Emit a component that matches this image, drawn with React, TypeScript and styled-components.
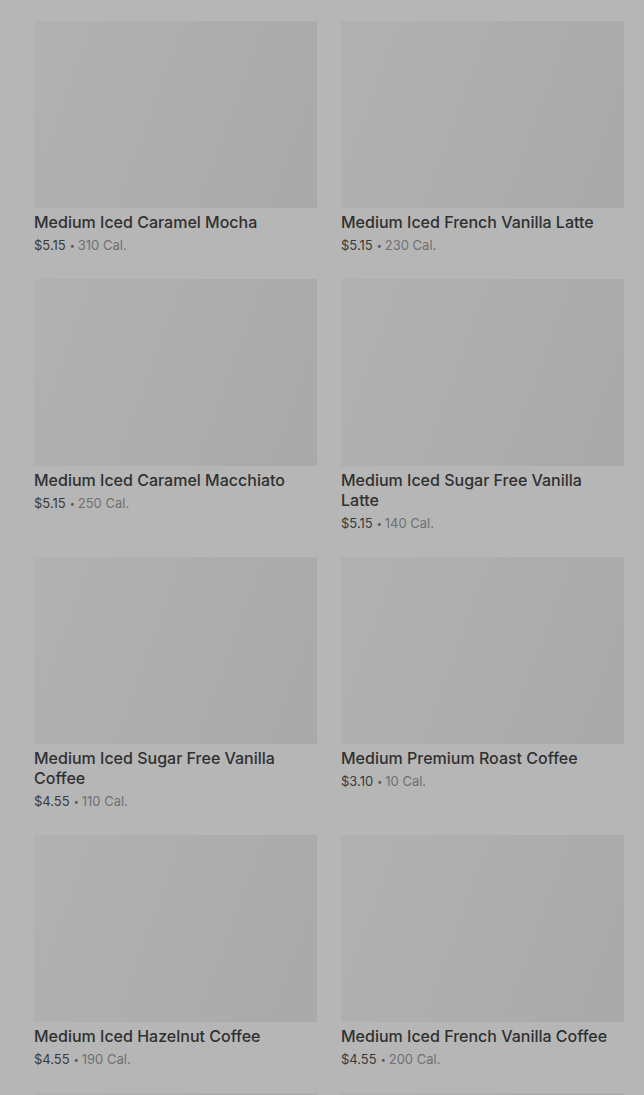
import styled, { createGlobalStyle } from 'styled-components';

// ===== GLOBAL =====
const GlobalStyle = createGlobalStyle`
  html, body {
    margin: 0;
    padding: 0;
    background: #b6b6b6;
  }
  body {
    font-family: Inter, "Noto Sans", "Liberation Sans", sans-serif;
    -webkit-font-smoothing: antialiased;
  }
`;

// ===== DATA =====
type Item = { name: string; price: string; cal: number };

const items: Item[] = [
  { name: 'Medium Iced Caramel Mocha', price: '$5.15', cal: 310 },
  { name: 'Medium Iced French Vanilla Latte', price: '$5.15', cal: 230 },
  { name: 'Medium Iced Caramel Macchiato', price: '$5.15', cal: 250 },
  { name: 'Medium Iced Sugar Free Vanilla Latte', price: '$5.15', cal: 140 },
  { name: 'Medium Iced Sugar Free Vanilla Coffee', price: '$4.55', cal: 110 },
  { name: 'Medium Premium Roast Coffee', price: '$3.10', cal: 10 },
  { name: 'Medium Iced Hazelnut Coffee', price: '$4.55', cal: 190 },
  { name: 'Medium Iced French Vanilla Coffee', price: '$4.55', cal: 200 },
  { name: '', price: '', cal: 0 },
  { name: '', price: '', cal: 0 },
];

// ===== STYLED COMPONENTS =====
const Page = styled.div`
  height: 1095px;
  overflow: hidden;
  padding: 21px 20px 0 34px;
  box-sizing: border-box;
`;

const Grid = styled.div`
  display: grid;
  grid-template-columns: 1fr 1fr;
  column-gap: 24px;
  row-gap: 25px;
`;

const Card = styled.div`
  display: flex;
  flex-direction: column;
  min-width: 0;
`;

const Thumb = styled.div`
  height: 187px;
  background: linear-gradient(110deg, #b1b1b1 0%, #adadad 55%, #a9a9a9 100%);
`;

const Title = styled.div`
  margin-top: 4px;
  padding-right: 10px;
  font-size: 16px;
  line-height: 20px;
  font-weight: 500;
  color: #303030;
`;

const Meta = styled.div`
  margin-top: 4px;
  height: 18px;
  font-size: 13px;
  line-height: 18px;
  color: #3a3a3a;
  white-space: nowrap;
`;

const Dot = styled.span`
  font-size: 9px;
  line-height: 0;
  margin: 0 3px 0 4px;
  color: #555;
  vertical-align: 1px;
`;

const Cal = styled.span`
  color: #707070;
`;

// ===== COMPONENT =====
export default function App() {
  return (
    <>
      <GlobalStyle />
      <Page>
        <Grid>
          {items.map((it, i) => (
            <Card key={i}>
              <Thumb />
              {it.name && (
                <>
                  <Title>{it.name}</Title>
                  <Meta>
                    {it.price}
                    <Dot>•</Dot>
                    <Cal>{it.cal} Cal.</Cal>
                  </Meta>
                </>
              )}
            </Card>
          ))}
        </Grid>
      </Page>
    </>
  );
}
